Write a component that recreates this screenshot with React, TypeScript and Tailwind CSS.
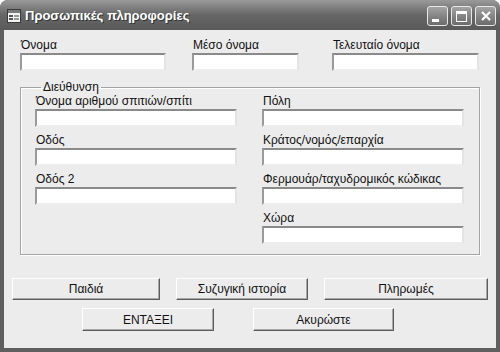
import React from "react";

const font = { fontFamily: '"Liberation Sans", Arial, sans-serif' };

function Field({ label, width }: { label: string; width: string }) {
  return (
    <div className={`flex flex-col ${width}`}>
      <div className="h-[14px] pl-[1px] text-[12px] leading-[14px] text-[#111]">{label}</div>
      <div className="mt-[1px] h-[18px] border-[2px] border-t-[#8a8a8a] border-l-[#9a9a9a] border-b-[#ededed] border-r-[#e4e4e4] bg-white" />
    </div>
  );
}

function Btn({ label, width, h }: { label: string; width: string; h: string }) {
  return (
    <div
      className={`flex items-center justify-center ${width} ${h} border border-t-white border-l-white border-b-[#5c5c5c] border-r-[#5c5c5c] bg-[#ececec] text-[12px] text-[#111] shadow-[inset_-1px_-1px_0_#a8a8a8]`}
    >
      {label}
    </div>
  );
}

function TitleButton({ children }: { children: React.ReactNode }) {
  return (
    <div className="flex h-[20px] w-[21px] items-center justify-center rounded-[3px] border border-[#e8e8e8] bg-gradient-to-b from-[#a4a4a4] via-[#858585] to-[#6c6c6c]">
      {children}
    </div>
  );
}

export default function App() {
  return (
    <div className="h-[352px] w-[500px] bg-white" style={font}>
      <div className="flex h-full flex-col overflow-hidden rounded-t-[8px] bg-[#5f5f5f]">
        {/* TITLE BAR */}
        <div className="flex h-[30px] items-center bg-gradient-to-b from-[#9a9a9a] via-[#666666] to-[#5a5a5a] pl-[7px] pr-[4px] pt-[2px]">
          <svg width="14" height="14" viewBox="0 0 14 14">
            <rect x="0.5" y="0.5" width="13" height="13" fill="#f2f2f2" stroke="#3a3a3a" />
            <rect x="1" y="1" width="12" height="3" fill="#7a7a7a" />
            <rect x="2" y="6" width="4" height="2" fill="#555" />
            <rect x="7" y="6" width="5" height="2" fill="#999" />
            <rect x="2" y="9" width="4" height="2" fill="#555" />
            <rect x="7" y="9" width="5" height="2" fill="#999" />
          </svg>
          <div className="ml-[4px] text-[13px] font-bold text-white [text-shadow:1px_1px_0_#333]">
            Προσωπικές πληροφορίες
          </div>
          <div className="ml-auto flex gap-[3px]">
            <TitleButton>
              <div className="mt-[8px] mr-[4px] h-[3px] w-[7px] bg-white" />
            </TitleButton>
            <TitleButton>
              <div className="h-[11px] w-[11px] border border-t-[3px] border-white" />
            </TitleButton>
            <TitleButton>
              <svg width="12" height="12" viewBox="0 0 12 12">
                <path d="M2 2 L10 10 M10 2 L2 10" stroke="white" strokeWidth="2.2" />
              </svg>
            </TitleButton>
          </div>
        </div>

        {/* CLIENT AREA */}
        <div className="flex flex-1 px-[4px] pb-[4px]">
          <div className="flex flex-1 flex-col bg-[#ececec]">
            <div className="mt-[8px] flex">
              <div className="ml-[16px]">
                <Field label="Όνομα" width="w-[146px]" />
              </div>
              <div className="ml-[26px]">
                <Field label="Μέσο όνομα" width="w-[107px]" />
              </div>
              <div className="ml-[33px]">
                <Field label="Τελευταίο όνομα" width="w-[147px]" />
              </div>
            </div>

            <fieldset className="ml-[16px] mt-[9px] w-[460px] border border-[#a4a4a4] pb-[10px] pl-[14px] pr-[15px] pt-0 shadow-[inset_1px_1px_0_white,1px_1px_0_white]">
              <legend className="ml-[6px] px-[2px] text-[12px] leading-[14px] text-[#111]">Διεύθυνση</legend>
              <div className="flex gap-[25px]">
                <div className="flex flex-col gap-[6px]">
                  <Field label="Όνομα αριθμού σπιτιών/σπίτι" width="w-[202px]" />
                  <Field label="Οδός" width="w-[202px]" />
                  <Field label="Οδός 2" width="w-[202px]" />
                </div>
                <div className="flex flex-col gap-[6px]">
                  <Field label="Πόλη" width="w-[202px]" />
                  <Field label="Κράτος/νομός/επαρχία" width="w-[202px]" />
                  <Field label="Φερμουάρ/ταχυδρομικός κώδικας" width="w-[202px]" />
                  <Field label="Χώρα" width="w-[202px]" />
                </div>
              </div>
            </fieldset>

            <div className="ml-[8px] mt-[23px] flex gap-[16px]">
              <Btn label="Παιδιά" width="w-[148px]" h="h-[22px]" />
              <Btn label="Συζυγική ιστορία" width="w-[132px]" h="h-[22px]" />
              <Btn label="Πληρωμές" width="w-[164px]" h="h-[22px]" />
            </div>
            <div className="ml-[78px] mt-[8px] flex gap-[39px]">
              <Btn label="ΕΝΤΑΞΕΙ" width="w-[132px]" h="h-[23px]" />
              <Btn label="Ακυρώστε" width="w-[141px]" h="h-[23px]" />
            </div>
          </div>
        </div>
      </div>
    </div>
  );
}
